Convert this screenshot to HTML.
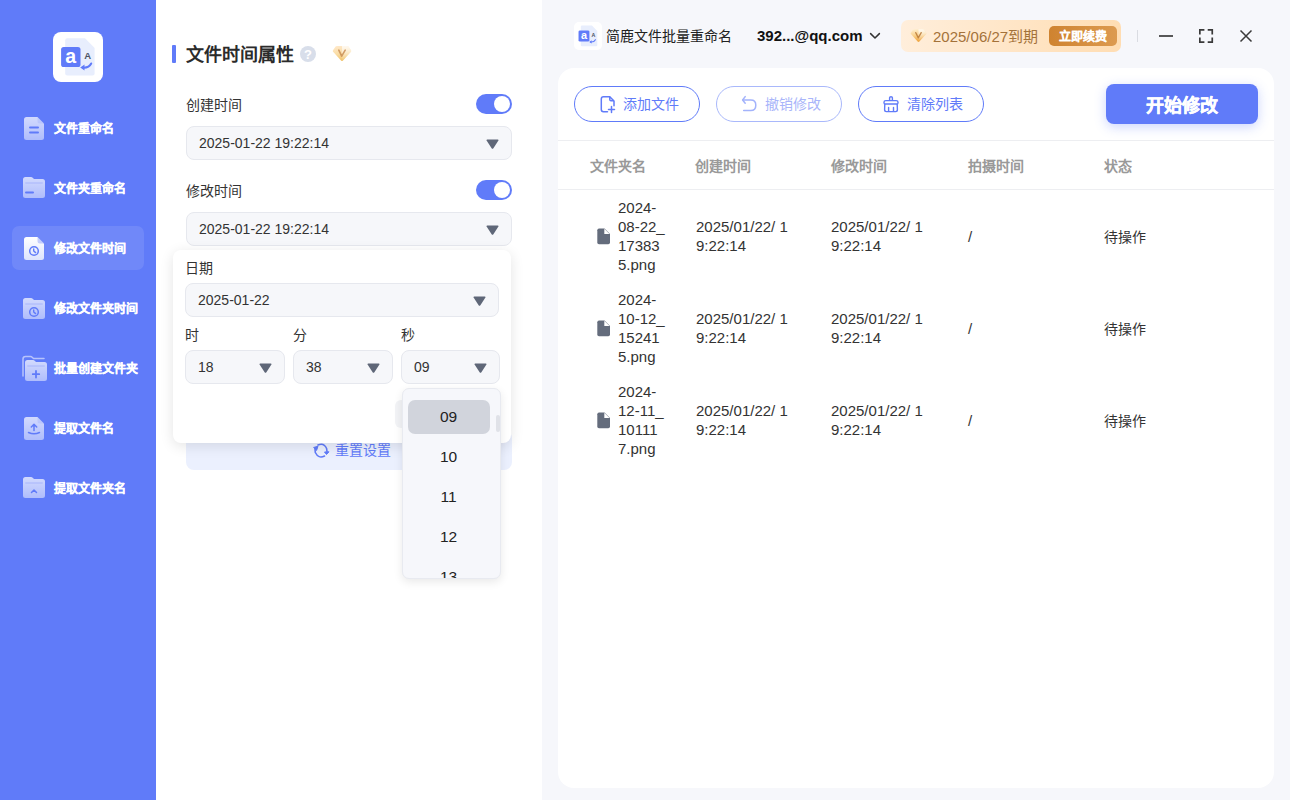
<!DOCTYPE html>
<html lang="zh-CN">
<head>
<meta charset="utf-8">
<style>
*{box-sizing:border-box;margin:0;padding:0}
html,body{width:1290px;height:800px;overflow:hidden;background:#fff;font-family:"Liberation Sans",sans-serif;color:#222}
.a{position:absolute}
.t{position:absolute;white-space:nowrap;line-height:1}
.side{left:0;top:0;width:156px;height:800px;background:#607BF9}
.mid{left:156px;top:0;width:386px;height:800px;background:#fff}
.right{left:542px;top:0;width:748px;height:800px;background:#F6F7FB}
.mi{font-size:12px;font-weight:bold;color:#fff;-webkit-text-stroke:0.25px #fff}
.lbl{font-size:14px;color:#333}
.inp{position:absolute;background:#F6F7FA;border:1px solid #E6E8EE;border-radius:8px}
.inp .v{position:absolute;left:12px;top:8px;font-size:14px;color:#333;line-height:16px;white-space:nowrap}
.tri{position:absolute}
.tog{position:absolute;width:36px;height:20px;border-radius:10px;background:#607BF9}
.tog:after{content:"";position:absolute;left:18px;top:2px;width:16px;height:16px;border-radius:50%;background:#fff}
.btn{position:absolute;height:36px;border:1px solid #607BF9;border-radius:18px;color:#607BF9;font-size:14px}
.th{font-size:14px;font-weight:bold;color:#999}
.td{font-size:15px;color:#333;line-height:19px;white-space:nowrap;position:absolute}
.cj{font-size:14px}
</style>
</head>
<body>
<!-- SIDEBAR -->
<div class="a side">
  <div class="a" style="left:53px;top:32px;width:50px;height:50px;background:#fff;border-radius:8px"><svg width="50" height="50" viewBox="0 0 50 50">
<path d="M14.2 6.3 H32 L41.6 16 V41.4 Q41.6 43.4 39.6 43.4 H14.2 Q12.2 43.4 12.2 41.4 V8.3 Q12.2 6.3 14.2 6.3Z" fill="#E8EEFD"/>
<rect x="8.1" y="15" width="19.4" height="20" rx="2.6" fill="#607BF9"/>
<text x="17.8" y="31.2" text-anchor="middle" font-family="Liberation Sans" font-weight="bold" font-size="19.5" fill="#fff">a</text>
<text x="34.7" y="26.9" text-anchor="middle" font-family="Liberation Sans" font-weight="bold" font-size="9.5" fill="#4C5263">A</text>
<path d="M38.2 31.5 Q36 36 30 35.6" stroke="#607BF9" stroke-width="2" fill="none" stroke-linecap="round"/>
<path d="M27.2 35.6 L31.5 32.4 L31.5 38.6Z" fill="#607BF9"/>
</svg></div>
  <div class="a" style="left:12px;top:226px;width:132px;height:44px;background:rgba(255,255,255,0.1);border-radius:7px"></div>
  <svg class="a" style="left:24px;top:117px" width="21" height="24" viewBox="0 0 21 24"><defs><linearGradient id="g24117" x1="0" y1="0" x2="0" y2="1"><stop offset="0" stop-color="#fff" stop-opacity="0.72"/><stop offset="1" stop-color="#fff" stop-opacity="0.5"/></linearGradient></defs><path d="M2.5 0 H13.5 L20 6.5 V20.5 Q20 23 17.5 23 H2.5 Q0 23 0 20.5 V2.5 Q0 0 2.5 0Z" fill="url(#g24117)"/><path d="M13.5 0 V4 Q13.5 6.5 16 6.5 H20Z" fill="rgba(96,123,249,0.15)"/><rect x="5" y="9.5" width="10" height="2" rx="1" fill="#607BF9"/><rect x="5" y="14.5" width="10" height="2" rx="1" fill="#607BF9"/></svg><svg class="a" style="left:23px;top:177px" width="23" height="22" viewBox="0 0 23 22"><defs><linearGradient id="f23177" x1="0" y1="0" x2="0" y2="1"><stop offset="0" stop-color="#fff" stop-opacity="0.72"/><stop offset="1" stop-color="#fff" stop-opacity="0.5"/></linearGradient></defs><path d="M2.5 0 H8 Q9 0 9.7 0.8 L11 2 H19.5 Q22 2 22 4.5 V18.5 Q22 21 19.5 21 H2.5 Q0 21 0 18.5 V2.5 Q0 0 2.5 0Z" fill="url(#f23177)"/><rect x="2" y="5" width="18" height="2" rx="1" fill="rgba(96,123,249,0.15)"/><rect x="2" y="14.5" width="9" height="2" rx="1" fill="#607BF9"/></svg><svg class="a" style="left:24px;top:237px" width="21" height="24" viewBox="0 0 21 24"><defs><linearGradient id="g24237" x1="0" y1="0" x2="0" y2="1"><stop offset="0" stop-color="#fff" stop-opacity="1"/><stop offset="1" stop-color="#DCE3FD" stop-opacity="1"/></linearGradient></defs><path d="M2.5 0 H13.5 L20 6.5 V20.5 Q20 23 17.5 23 H2.5 Q0 23 0 20.5 V2.5 Q0 0 2.5 0Z" fill="url(#g24237)"/><path d="M13.5 0 V4 Q13.5 6.5 16 6.5 H20Z" fill="rgba(96,123,249,0.35)"/><circle cx="10" cy="14" r="4.3" stroke="#607BF9" stroke-width="1.5" fill="none"/><path d="M9.7 12 V14 L11.6 15.6" stroke="#607BF9" stroke-width="1.4" fill="none" stroke-linecap="round"/></svg><svg class="a" style="left:23px;top:298px" width="23" height="22" viewBox="0 0 23 22"><defs><linearGradient id="f23298" x1="0" y1="0" x2="0" y2="1"><stop offset="0" stop-color="#fff" stop-opacity="0.72"/><stop offset="1" stop-color="#fff" stop-opacity="0.5"/></linearGradient></defs><path d="M2.5 0 H8 Q9 0 9.7 0.8 L11 2 H19.5 Q22 2 22 4.5 V18.5 Q22 21 19.5 21 H2.5 Q0 21 0 18.5 V2.5 Q0 0 2.5 0Z" fill="url(#f23298)"/><rect x="2" y="5" width="18" height="2" rx="1" fill="rgba(96,123,249,0.15)"/><circle cx="11" cy="14" r="4.3" stroke="#607BF9" stroke-width="1.5" fill="none"/><path d="M10.7 12 V14 L12.6 15.6" stroke="#607BF9" stroke-width="1.4" fill="none" stroke-linecap="round"/></svg><svg class="a" style="left:21px;top:355px" width="27" height="27" viewBox="0 0 27 27"><defs><linearGradient id="bf" x1="0" y1="0" x2="0" y2="1"><stop offset="0" stop-color="#fff" stop-opacity="0.72"/><stop offset="1" stop-color="#fff" stop-opacity="0.5"/></linearGradient></defs>
<path d="M2 21 V4 Q2 1.5 4.5 1.5 H9.5 Q10.5 1.5 11.2 2.3 L12.5 3.5 H23" stroke="rgba(255,255,255,0.55)" stroke-width="1.5" fill="none" stroke-linecap="round"/>
<path transform="translate(4,5)" d="M2.5 0 H8 Q9 0 9.7 0.8 L11 2 H19.5 Q22 2 22 4.5 V18.5 Q22 21 19.5 21 H2.5 Q0 21 0 18.5 V2.5 Q0 0 2.5 0Z" fill="url(#bf)"/><rect x="6" y="10" width="18" height="2" rx="1" fill="rgba(96,123,249,0.15)"/>
<path d="M15 16 V22.5 M11.8 19.2 H18.2" stroke="#607BF9" stroke-width="1.8" stroke-linecap="round"/></svg><svg class="a" style="left:24px;top:417px" width="21" height="24" viewBox="0 0 21 24"><defs><linearGradient id="g24417" x1="0" y1="0" x2="0" y2="1"><stop offset="0" stop-color="#fff" stop-opacity="0.72"/><stop offset="1" stop-color="#fff" stop-opacity="0.5"/></linearGradient></defs><path d="M2.5 0 H13.5 L20 6.5 V20.5 Q20 23 17.5 23 H2.5 Q0 23 0 20.5 V2.5 Q0 0 2.5 0Z" fill="url(#g24417)"/><path d="M13.5 0 V4 Q13.5 6.5 16 6.5 H20Z" fill="rgba(96,123,249,0.15)"/><path d="M10 13.5 V7.5 M7.3 10 L10 7.3 L12.7 10" stroke="#607BF9" stroke-width="1.5" fill="none" stroke-linecap="round" stroke-linejoin="round"/><path d="M4.5 15.5 Q10 18 15.5 15.5" stroke="#607BF9" stroke-width="1.5" fill="none" stroke-linecap="round"/></svg><svg class="a" style="left:23px;top:477px" width="23" height="22" viewBox="0 0 23 22"><defs><linearGradient id="f23477" x1="0" y1="0" x2="0" y2="1"><stop offset="0" stop-color="#fff" stop-opacity="0.72"/><stop offset="1" stop-color="#fff" stop-opacity="0.5"/></linearGradient></defs><path d="M2.5 0 H8 Q9 0 9.7 0.8 L11 2 H19.5 Q22 2 22 4.5 V18.5 Q22 21 19.5 21 H2.5 Q0 21 0 18.5 V2.5 Q0 0 2.5 0Z" fill="url(#f23477)"/><rect x="2" y="5" width="18" height="2" rx="1" fill="rgba(96,123,249,0.15)"/><path d="M8.5 15.5 L11 13 L13.5 15.5" stroke="#607BF9" stroke-width="1.5" fill="none" stroke-linecap="round" stroke-linejoin="round"/></svg>
  <div class="t mi" style="left:54px;top:123px">文件重命名</div>
  <div class="t mi" style="left:54px;top:183px">文件夹重命名</div>
  <div class="t mi" style="left:54px;top:243px">修改文件时间</div>
  <div class="t mi" style="left:54px;top:303px">修改文件夹时间</div>
  <div class="t mi" style="left:54px;top:363px">批量创建文件夹</div>
  <div class="t mi" style="left:54px;top:423px">提取文件名</div>
  <div class="t mi" style="left:54px;top:483px">提取文件夹名</div>
</div>

<!-- MIDDLE -->
<div class="a mid"></div>
<div class="a" style="left:172px;top:45px;width:4px;height:18px;background:#607BF9;border-radius:1px"></div>
<div class="t" style="left:186px;top:46px;font-size:18px;font-weight:bold;color:#2B2B2B">文件时间属性</div>
<div class="a" style="left:300px;top:46px;width:16px;height:16px;border-radius:50%;background:#D8DEEA;color:#fff;font-size:13px;font-weight:bold;text-align:center;line-height:17px">?</div>
<svg class="a" style="left:332px;top:45px" width="20" height="17" viewBox="0 0 20 17"><defs><linearGradient id="gm1" x1="0" y1="0" x2="0.2" y2="1"><stop offset="0" stop-color="#FFE9CC"/><stop offset="0.55" stop-color="#FADDA6"/><stop offset="1" stop-color="#F1C46E"/></linearGradient><linearGradient id="gm1h" x1="0" y1="0" x2="0" y2="1"><stop offset="0" stop-color="#fff" stop-opacity="0.75"/><stop offset="1" stop-color="#fff" stop-opacity="0"/></linearGradient></defs>
<path d="M5 1 H15 Q16 1 16.6 1.8 L19 5.2 Q19.5 6 18.9 6.7 L11 15.6 Q10 16.6 9 15.6 L1.1 6.7 Q0.5 6 1 5.2 L3.4 1.8 Q4 1 5 1Z" fill="url(#gm1)"/>
<path d="M10 1 H15 Q16 1 16.6 1.8 L19 5.2 Q19.5 6 18.9 6.7 L10 16 Z" fill="url(#gm1h)"/>
<path d="M6.8 5.2 L9.7 11.2 L13.2 5.2" stroke="#C98E55" stroke-opacity="0.85" stroke-width="1.6" fill="none" stroke-linecap="round" stroke-linejoin="round"/></svg>

<div class="t lbl" style="left:186px;top:98px">创建时间</div>
<div class="tog" style="left:476px;top:94px"></div>
<div class="inp" style="left:186px;top:126px;width:326px;height:34px"><span class="v">2025-01-22 19:22:14</span><svg class="tri" style="right:12px;top:12px" width="13" height="10" viewBox="0 0 13 10"><path d="M1.2 0.4 H11.8 Q13 0.4 12.4 1.5 L7.4 9.3 Q6.5 10.4 5.6 9.3 L0.6 1.5 Q0 0.4 1.2 0.4Z" fill="#5F6778"/></svg></div>

<div class="t lbl" style="left:186px;top:184px">修改时间</div>
<div class="tog" style="left:476px;top:180px"></div>
<div class="inp" style="left:186px;top:212px;width:326px;height:34px"><span class="v">2025-01-22 19:22:14</span><svg class="tri" style="right:12px;top:12px" width="13" height="10" viewBox="0 0 13 10"><path d="M1.2 0.4 H11.8 Q13 0.4 12.4 1.5 L7.4 9.3 Q6.5 10.4 5.6 9.3 L0.6 1.5 Q0 0.4 1.2 0.4Z" fill="#5F6778"/></svg></div>

<div class="a" style="left:186px;top:430px;width:326px;height:40px;background:#EBF0FE;border-radius:8px"></div>
<svg class="a" style="left:312px;top:442px" width="18" height="17" viewBox="0 0 18 17"><path d="M6 3 Q12 0.5 14.6 6.5 L15 9.5" stroke="#607BF9" stroke-width="1.6" fill="none" stroke-linecap="round"/><path d="M12.5 10 L14.5 12.5 L17 9.8Z" fill="#607BF9" stroke="#607BF9" stroke-width="1" stroke-linejoin="round"/><path d="M12.5 14 Q6.5 17 3.3 10.5 L3 7" stroke="#607BF9" stroke-width="1.6" fill="none" stroke-linecap="round"/><path d="M1.6 5.5 L6 4.2 L4.6 8.4Z" fill="#607BF9" stroke="#607BF9" stroke-width="1" stroke-linejoin="round"/></svg>
<div class="t" style="left:335px;top:443px;font-size:14px;color:#607BF9">重置设置</div>

<!-- popup -->
<div class="a" style="left:173px;top:250px;width:338px;height:193px;background:#fff;border-radius:8px;box-shadow:0 3px 14px rgba(0,0,0,0.11)"></div>
<div class="t lbl" style="left:185px;top:261px">日期</div>
<div class="inp" style="left:185px;top:283px;width:314px;height:34px"><span class="v">2025-01-22</span><svg class="tri" style="right:12px;top:12px" width="13" height="10" viewBox="0 0 13 10"><path d="M1.2 0.4 H11.8 Q13 0.4 12.4 1.5 L7.4 9.3 Q6.5 10.4 5.6 9.3 L0.6 1.5 Q0 0.4 1.2 0.4Z" fill="#5F6778"/></svg></div>
<div class="t lbl" style="left:185px;top:328px">时</div>
<div class="t lbl" style="left:293px;top:328px">分</div>
<div class="t lbl" style="left:401px;top:328px">秒</div>
<div class="inp" style="left:185px;top:350px;width:100px;height:34px"><span class="v">18</span><svg class="tri" style="right:12px;top:12px" width="13" height="10" viewBox="0 0 13 10"><path d="M1.2 0.4 H11.8 Q13 0.4 12.4 1.5 L7.4 9.3 Q6.5 10.4 5.6 9.3 L0.6 1.5 Q0 0.4 1.2 0.4Z" fill="#5F6778"/></svg></div>
<div class="inp" style="left:293px;top:350px;width:100px;height:34px"><span class="v">38</span><svg class="tri" style="right:12px;top:12px" width="13" height="10" viewBox="0 0 13 10"><path d="M1.2 0.4 H11.8 Q13 0.4 12.4 1.5 L7.4 9.3 Q6.5 10.4 5.6 9.3 L0.6 1.5 Q0 0.4 1.2 0.4Z" fill="#5F6778"/></svg></div>
<div class="inp" style="left:401px;top:350px;width:99px;height:34px"><span class="v">09</span><svg class="tri" style="right:12px;top:12px" width="13" height="10" viewBox="0 0 13 10"><path d="M1.2 0.4 H11.8 Q13 0.4 12.4 1.5 L7.4 9.3 Q6.5 10.4 5.6 9.3 L0.6 1.5 Q0 0.4 1.2 0.4Z" fill="#5F6778"/></svg></div>
<div class="a" style="left:395px;top:400px;width:60px;height:28px;background:#F2F3F6;border-radius:6px"></div>

<!-- dropdown -->
<div class="a" style="left:401.5px;top:387.5px;width:99px;height:191px;background:#F6F7FB;border:1px solid #E8EAF0;border-radius:7px;box-shadow:0 3px 10px rgba(0,0,0,0.09);overflow:hidden">
  <div class="a" style="left:5px;top:11px;width:82px;height:34px;background:#D1D4DC;border-radius:7px"></div>
  <div class="a" style="left:93px;top:26px;width:4px;height:17px;background:#E0E2E8;border-radius:2px"></div>
  <div class="t" style="left:-1px;width:94px;text-align:center;top:20px;font-size:15.5px;color:#222">09</div>
  <div class="t" style="left:-1px;width:94px;text-align:center;top:60px;font-size:15.5px;color:#222">10</div>
  <div class="t" style="left:-1px;width:94px;text-align:center;top:100px;font-size:15.5px;color:#222">11</div>
  <div class="t" style="left:-1px;width:94px;text-align:center;top:140px;font-size:15.5px;color:#222">12</div>
  <div class="t" style="left:-1px;width:94px;text-align:center;top:180px;font-size:15.5px;color:#222">13</div>
</div>

<!-- RIGHT -->
<div class="a right"></div>
<div class="a" style="left:574px;top:22px;width:28px;height:28px;background:#fff;border-radius:5px"><svg width="28" height="28" viewBox="0 0 50 50">
<path d="M14.2 6.3 H32 L41.6 16 V41.4 Q41.6 43.4 39.6 43.4 H14.2 Q12.2 43.4 12.2 41.4 V8.3 Q12.2 6.3 14.2 6.3Z" fill="#E8EEFD"/>
<rect x="8.1" y="15" width="19.4" height="20" rx="2.6" fill="#607BF9"/>
<text x="17.8" y="31.2" text-anchor="middle" font-family="Liberation Sans" font-weight="bold" font-size="19.5" fill="#fff">a</text>
<text x="34.7" y="26.9" text-anchor="middle" font-family="Liberation Sans" font-weight="bold" font-size="9.5" fill="#4C5263">A</text>
<path d="M38.2 31.5 Q36 36 30 35.6" stroke="#607BF9" stroke-width="2" fill="none" stroke-linecap="round"/>
<path d="M27.2 35.6 L31.5 32.4 L31.5 38.6Z" fill="#607BF9"/>
</svg></div>
<div class="t" style="left:606px;top:29px;font-size:14px;color:#222">简鹿文件批量重命名</div>
<div class="t" style="left:757px;top:28px;font-size:15px;font-weight:bold;color:#111">392...@qq.com</div>
<svg class="a" style="left:868px;top:30px" width="14" height="12" viewBox="0 0 14 12"><path d="M2.6 3.6 L7 8 L11.4 3.6" stroke="#333" stroke-width="1.5" fill="none" stroke-linecap="round" stroke-linejoin="round"/></svg>
<div class="a" style="left:901px;top:20px;width:220px;height:32px;border-radius:7px;background:linear-gradient(90deg,#FFEEDB,#FFDDB3)"></div>
<svg class="a" style="left:910px;top:28px" width="17" height="15" viewBox="0 0 20 17"><defs><linearGradient id="gm2" x1="0" y1="0" x2="0.2" y2="1"><stop offset="0" stop-color="#FFF1D6"/><stop offset="0.55" stop-color="#F9D08A"/><stop offset="1" stop-color="#EFA43E"/></linearGradient><linearGradient id="gm2h" x1="0" y1="0" x2="0" y2="1"><stop offset="0" stop-color="#fff" stop-opacity="0.75"/><stop offset="1" stop-color="#fff" stop-opacity="0"/></linearGradient></defs>
<path d="M5 1 H15 Q16 1 16.6 1.8 L19 5.2 Q19.5 6 18.9 6.7 L11 15.6 Q10 16.6 9 15.6 L1.1 6.7 Q0.5 6 1 5.2 L3.4 1.8 Q4 1 5 1Z" fill="url(#gm2)"/>
<path d="M10 1 H15 Q16 1 16.6 1.8 L19 5.2 Q19.5 6 18.9 6.7 L10 16 Z" fill="url(#gm2h)"/>
<path d="M6.8 5.2 L9.7 11.2 L13.2 5.2" stroke="#B97836" stroke-opacity="0.85" stroke-width="1.6" fill="none" stroke-linecap="round" stroke-linejoin="round"/></svg>
<div class="t" style="left:933px;top:29px;font-size:15px;color:#A4723A">2025/06/27到期</div>
<div class="a" style="left:1049px;top:26px;width:68px;height:20px;border-radius:5px;background:linear-gradient(90deg,#CF8330,#DC9A50)"></div>
<div class="t" style="left:1059px;top:31px;font-size:12px;font-weight:bold;color:#fff;-webkit-text-stroke:0.2px #fff">立即续费</div>
<div class="a" style="left:1137px;top:30px;width:1px;height:12px;background:#DADCE2"></div>
<svg class="a" style="left:1156px;top:26px" width="100" height="20" viewBox="0 0 100 20">
<path d="M3 10 H17" stroke="#3A3A3A" stroke-width="1.7"/>
<path d="M43.85 8.4 V3.85 H48.4 M51.7 3.85 H56.25 V8.4 M56.25 11.6 V16.15 H51.7 M48.4 16.15 H43.85 V11.6" stroke="#3A3A3A" stroke-width="1.7" fill="none"/>
<path d="M84.5 4.5 L95.5 15.5 M95.5 4.5 L84.5 15.5" stroke="#3A3A3A" stroke-width="1.5"/>
</svg>

<div class="a" style="left:558px;top:68px;width:716px;height:720px;background:#fff;border-radius:16px"></div>
<div class="btn" style="left:574px;top:86px;width:126px"></div>
<svg class="a" style="left:596px;top:92px" width="24" height="24" viewBox="0 0 24 24"><path d="M11.5 19.7 H7.5 Q5.3 19.7 5.3 17.5 V7 Q5.3 4.8 7.5 4.8 H13.8 L18 9 V13.8" stroke="#607BF9" stroke-width="1.5" fill="none" stroke-linecap="round" stroke-linejoin="round"/><path d="M13.8 4.8 V7.5 Q13.8 8.8 15 8.8 H18" stroke="#607BF9" stroke-width="1.5" fill="none" stroke-linejoin="round"/><path d="M15.5 14.5 V20.5 M12.5 17.5 H18.5" stroke="#607BF9" stroke-width="1.5" stroke-linecap="round"/></svg>
<div class="t" style="left:623px;top:97px;font-size:14px;color:#607BF9">添加文件</div>
<div class="btn" style="left:716px;top:86px;width:126px;border-color:#A9B8FB"></div>
<svg class="a" style="left:738px;top:92px" width="24" height="24" viewBox="0 0 24 24"><path d="M7.2 4.6 L4.6 8 L7.2 11.2" stroke="#A3B3FB" stroke-width="1.5" fill="none" stroke-linecap="round" stroke-linejoin="round"/><path d="M5 8 H12.8 Q17.8 8 17.8 13.2 Q17.8 18.5 12.8 18.5 H5.7" stroke="#A3B3FB" stroke-width="1.5" fill="none" stroke-linecap="round"/></svg>
<div class="t" style="left:765px;top:97px;font-size:14px;color:#A9B5FA">撤销修改</div>
<div class="btn" style="left:858px;top:86px;width:126px"></div>
<svg class="a" style="left:879px;top:92px" width="24" height="24" viewBox="0 0 24 24"><path d="M10.6 8.6 V5.8 Q10.6 4.8 12 4.8 Q13.4 4.8 13.4 5.8 V8.6" stroke="#607BF9" stroke-width="1.4" fill="none"/><path d="M6.8 8.6 H17.2 Q19 8.6 19 10.3 V10.8 Q19 12 17.8 12 H6.2 Q5 12 5 10.8 V10.3 Q5 8.6 6.8 8.6Z" stroke="#607BF9" stroke-width="1.4" fill="none"/><path d="M5.8 12 L5.6 17.8 Q5.6 19.6 7.4 19.6 H16.6 Q18.4 19.6 18.4 17.8 L18.2 12" stroke="#607BF9" stroke-width="1.4" fill="none"/><path d="M9.6 15.5 V19.3 M14.5 15.5 V19.3" stroke="#607BF9" stroke-width="1.4" stroke-linecap="round"/></svg>
<div class="t" style="left:907px;top:97px;font-size:14px;color:#607BF9">清除列表</div>
<div class="a" style="left:1106px;top:84px;width:152px;height:40px;background:#607BF9;border-radius:8px;box-shadow:0 3px 12px rgba(96,123,249,0.32)"></div>
<div class="t" style="left:1146px;top:97px;font-size:18px;font-weight:bold;color:#fff;-webkit-text-stroke:0.4px #fff">开始修改</div>

<div class="a" style="left:558px;top:140px;width:716px;height:1px;background:#EDEEF1"></div>
<div class="a" style="left:558px;top:189px;width:716px;height:1px;background:#EDEEF1"></div>
<div class="t th" style="left:590px;top:159px">文件夹名</div>
<div class="t th" style="left:695px;top:159px">创建时间</div>
<div class="t th" style="left:831px;top:159px">修改时间</div>
<div class="t th" style="left:968px;top:159px">拍摄时间</div>
<div class="t th" style="left:1104px;top:159px">状态</div>

<svg class="a" style="left:597px;top:228px" width="14" height="17" viewBox="0 0 14 17"><path d="M2 0.5 H7.5 L13 6 V14.5 Q13 16.2 11.3 16.2 H2 Q0.3 16.2 0.3 14.5 V2.2 Q0.3 0.5 2 0.5Z" fill="#646C7C"/><path d="M7.3 0.7 V5.9 H12.6Z" fill="#fff"/></svg>
<div class="td" style="left:618px;top:198px">2024-<br>08-22_<br>17383<br>5.png</div>
<div class="td" style="left:696px;top:217px">2025/01/22/ 1<br>9:22:14</div>
<div class="td" style="left:831px;top:217px">2025/01/22/ 1<br>9:22:14</div>
<div class="td" style="left:968px;top:227px">/</div>
<div class="td cj" style="left:1104px;top:228px">待操作</div>

<svg class="a" style="left:597px;top:320px" width="14" height="17" viewBox="0 0 14 17"><path d="M2 0.5 H7.5 L13 6 V14.5 Q13 16.2 11.3 16.2 H2 Q0.3 16.2 0.3 14.5 V2.2 Q0.3 0.5 2 0.5Z" fill="#646C7C"/><path d="M7.3 0.7 V5.9 H12.6Z" fill="#fff"/></svg>
<div class="td" style="left:618px;top:290px">2024-<br>10-12_<br>15241<br>5.png</div>
<div class="td" style="left:696px;top:309px">2025/01/22/ 1<br>9:22:14</div>
<div class="td" style="left:831px;top:309px">2025/01/22/ 1<br>9:22:14</div>
<div class="td" style="left:968px;top:319px">/</div>
<div class="td cj" style="left:1104px;top:320px">待操作</div>

<svg class="a" style="left:597px;top:412px" width="14" height="17" viewBox="0 0 14 17"><path d="M2 0.5 H7.5 L13 6 V14.5 Q13 16.2 11.3 16.2 H2 Q0.3 16.2 0.3 14.5 V2.2 Q0.3 0.5 2 0.5Z" fill="#646C7C"/><path d="M7.3 0.7 V5.9 H12.6Z" fill="#fff"/></svg>
<div class="td" style="left:618px;top:382px">2024-<br>12-11_<br>10111<br>7.png</div>
<div class="td" style="left:696px;top:401px">2025/01/22/ 1<br>9:22:14</div>
<div class="td" style="left:831px;top:401px">2025/01/22/ 1<br>9:22:14</div>
<div class="td" style="left:968px;top:411px">/</div>
<div class="td cj" style="left:1104px;top:412px">待操作</div>
</body>
</html>
